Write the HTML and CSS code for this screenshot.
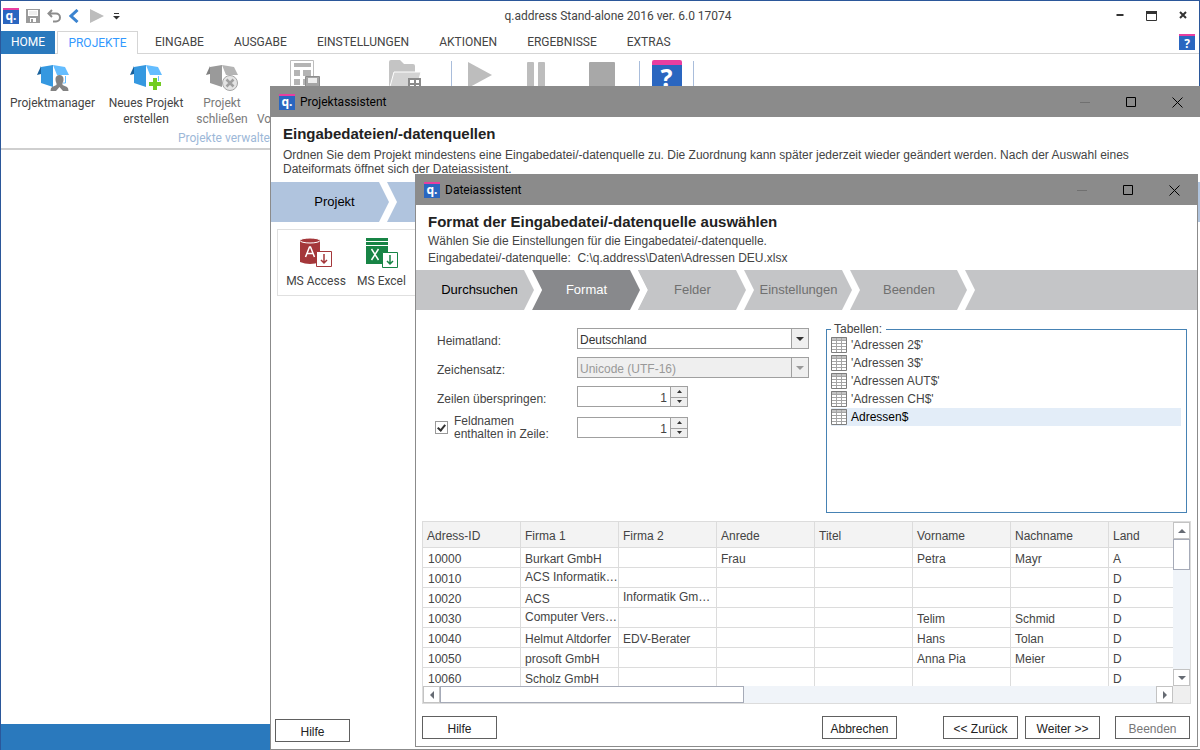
FILE: index.html
```html
<!DOCTYPE html>
<html lang="de">
<head>
<meta charset="utf-8">
<title>q.address Stand-alone 2016</title>
<link rel="stylesheet" href="styles.css">
</head>
<body>
<div class="app">
  <header class="app-bar">
    <div class="quick">
      <span class="logo">q.</span>
      <button class="plain" aria-label="Speichern"><svg width="14" height="14" viewBox="0 0 14 14"><path d="M0 0h14v14H0z" fill="#9b9b9b"/><path d="M2 1h10v6H2zM4 9h6v4H4z" fill="#fff"/><path d="M3 3h8M3 5h8" stroke="#ddd"/><path d="M5 10h2v3H5z" fill="#9b9b9b"/></svg></button>
      <button class="plain" aria-label="Rückgängig"><svg width="15" height="14" viewBox="0 0 15 14"><path d="M5 1 1.500 4.500 5 8M2 4.500h7a4 4 0 0 1 0 8H6" fill="none" stroke="#8d8d8d" stroke-width="2"/></svg></button>
      <button class="plain" aria-label="Zurück"><svg width="10" height="14" viewBox="0 0 10 14"><path d="M8.500 1 2 7l6.500 6" fill="none" stroke="#3b84d0" stroke-width="3"/></svg></button>
      <button class="plain" aria-label="Ausführen"><svg width="14" height="14" viewBox="0 0 14 14"><path d="M0 0l14 7-14 7z" fill="#bdbdbd"/></svg></button>
      <button class="plain" aria-label="Anpassen"><svg width="7" height="7" viewBox="0 0 7 7"><path d="M1 .5h5" stroke="#333"/><path d="M0 3h7L3.500 6.500z" fill="#333"/></svg></button>
    </div>
    <h1 class="app-title">q.address Stand-alone 2016 ver. 6.0 17074</h1>
    <div class="app-controls">
      <button class="plain" aria-label="Minimieren"><svg width="8" height="12" viewBox="0 0 8 12"><path d="M0.500 5h7" stroke="#333" stroke-width="2"/></svg></button>
      <button class="plain" aria-label="Maximieren"><svg width="11" height="11" viewBox="0 0 11 11"><path d="M.5.5h10v9H.5z" fill="none" stroke="#333"/><path d="M0 0h11v3H0z" fill="#333"/></svg></button>
      <button class="plain" aria-label="Schließen"><svg width="8" height="12" viewBox="0 0 8 12"><path d="M1 2l6 6M7 2l-6 6" stroke="#333" stroke-width="2"/></svg></button>
    </div>
  </header>
  <nav class="tabs">
    <button class="tab home">HOME</button>
    <button class="tab active">PROJEKTE</button>
    <button class="tab">EINGABE</button>
    <button class="tab">AUSGABE</button>
    <button class="tab">EINSTELLUNGEN</button>
    <button class="tab">AKTIONEN</button>
    <button class="tab">ERGEBNISSE</button>
    <button class="tab">EXTRAS</button>
    <button class="logo help" aria-label="Hilfe">?</button>
  </nav>
  <section class="ribbon">
    <div class="tools">
      <button class="tool w-xl">
        <svg width="36" height="32" viewBox="0 0 36 32"><path d="M2 15 6 6v8z" fill="#17609b"/><path d="M6 7l12-2v22L6 23z" fill="#3598e0"/><path d="M18 5l12 2 4 8H22z" fill="#64bdff"/><path d="M30.500 16v7H28" fill="none" stroke="#64bdff"/><path d="M24.500 15a4 4 0 0 1 4 4.500c0 2-.8 3-1 4v1.500l4.500 2q1.500 1 1.500 4h-5.500L24.500 27 21 31h-5.500q0-3 1.500-4l4.500-2v-1.500c-.2-1-1-2-1-4A4 4 0 0 1 24.500 15z" fill="#828282"/></svg>
        Projektmanager</button>
      <button class="tool w-l">
        <svg width="36" height="32" viewBox="0 0 36 32"><path d="M2 15 6 6v8z" fill="#17609b"/><path d="M6 7l12-2v22L6 23z" fill="#3598e0"/><path d="M18 5l12 2 4 8H22z" fill="#64bdff"/><path d="M30.500 16v5" stroke="#64bdff"/><path d="M25 18h4v4h4v4h-4v4h-4v-4h-4v-4h4z" fill="#72cc22"/></svg>
        Neues Projekt<br>erstellen</button>
      <button class="tool w-m" disabled>
        <svg width="36" height="32" viewBox="0 0 36 32"><path d="M2 15 6 6v8z" fill="#808080"/><path d="M6 7l12-2v22L6 23z" fill="#9a9a9a"/><path d="M18 5l12 2 4 8H22z" fill="#b4b4b4"/><circle cx="26" cy="23" r="7.500" fill="#e4e4e4" stroke="#a5a5a5"/><path d="M22.500 19.500l7 7m0-7-7 7" stroke="#a0a0a0" stroke-width="2.500"/></svg>
        Projekt<br>schließen</button>
      <button class="tool w-xl start" disabled>
        <svg width="32" height="32" viewBox="0 0 32 32"><path d="M.5.5h23v32H.5z" fill="#fff" stroke="#bdbdbd"/><path d="M4 3h17v4H4zM4 10h6v6H4zM4 19h6v6H4zM13 10h8v6h-8z" fill="#b4b4b4"/><path d="M13 19h4v6h-4z" fill="#b4b4b4"/><path d="M15.500 16.500h14v14h-14z" fill="#a5a5a5" stroke="#8d8d8d"/><path d="M18 18h9v5h-9z" fill="#eee"/></svg>
        <br>Vo</button>
      <button class="tool w-folder" disabled aria-label="Öffnen">
        <svg width="34" height="32" viewBox="0 0 34 32"><path d="M1 30V2q0-2 2-2h9l4 4h9q2 0 2 2v24z" fill="#c4c4c4"/><path d="M6 12h27l-5 18H1z" fill="#d3d3d3" stroke="#fff"/><path d="M20 18h13v12H20z" fill="#8a8a8a"/><path d="M22 20h4v3h-4zM28 20h3v3h-3zM22 25h4v3h-4zM28 25h3v3h-3z" fill="#fff"/></svg></button>
      <span class="sep"></span>
      <button class="tool w-s" disabled aria-label="Start"><svg width="24" height="32" viewBox="0 0 24 32"><path d="M0 2l24 13L0 28z" fill="#bdbdbd"/></svg></button>
      <button class="tool w-s" disabled aria-label="Pause"><svg width="18" height="32" viewBox="0 0 18 32"><path d="M0 3q0-1 1-1h5q1 0 1 1v29H0zM11 3q0-1 1-1h5q1 0 1 1v29h-7z" fill="#bdbdbd"/></svg></button>
      <button class="tool w-stop" disabled aria-label="Stopp"><svg width="26" height="32" viewBox="0 0 26 32"><path d="M0 3q0-1 1-1h24q1 0 1 1v25H0z" fill="#a8a8a8"/></svg></button>
      <span class="sep"></span>
      <button class="tool w-help" aria-label="Hilfe"><span class="logo big">?</span></button>
      <span class="sep"></span>
    </div>
    <p class="group-name">Projekte verwalten</p>
  </section>
  <main class="workspace"></main>
  <footer class="status"></footer>
</div>

<section class="dialog project" aria-label="Projektassistent">
  <header class="dialog-bar">
    <span class="logo">q.</span><h2>Projektassistent</h2>
    <button class="plain" disabled aria-label="Minimieren"><svg width="11" height="11"><path d="M0 5.500h10" stroke="#707070"/></svg></button>
    <button class="plain" aria-label="Maximieren"><svg width="11" height="11"><path d="M.5.5h9v9h-9z" fill="none" stroke="#000"/></svg></button>
    <button class="plain" aria-label="Schließen"><svg width="11" height="11"><path d="M.5.5l10 10m0-10-10 10" stroke="#000"/></svg></button>
  </header>
  <div class="intro">
    <h3>Eingabedateien/-datenquellen</h3>
    <p>Ordnen Sie dem Projekt mindestens eine Eingabedatei/-datenquelle zu. Die Zuordnung kann später jederzeit wieder geändert werden. Nach der Auswahl eines<br>Dateiformats öffnet sich der Dateiassistent.</p>
  </div>
  <ol class="steps blue">
    <li>Projekt<svg width="19" height="40"><path d="M0 0h8l10 20L8 40H0l10-20z" fill="#fff"/></svg></li>
  </ol>
  <div class="sources">
    <button class="source">
      <svg width="34" height="32" viewBox="0 0 34 32"><path d="M1 3v22q10 4 20 0V3z" fill="#a4373a"/><ellipse cx="11" cy="3.500" rx="10" ry="2.500" fill="#a4373a" stroke="#fff"/><path d="M6.500 20l4-10h1l4 10M8 16.500h6" fill="none" stroke="#fff" stroke-width="1.500"/><path d="M17.500 14.500h15v15h-15z" fill="#fff" stroke="#a4373a"/><path d="M25 17v9m-3-3l3 3 3-3" fill="none" stroke="#a4373a" stroke-width="1.500"/></svg>
      MS Access</button>
    <button class="source">
      <svg width="34" height="32" viewBox="0 0 34 32"><path d="M1 1h22v3H1zM1 5h22v3H1zM1 9h22v18H1z" fill="#178445"/><path d="M6.500 12l7 11m0-11-7 11" stroke="#fff" stroke-width="1.500"/><path d="M17.500 15.500h15v15h-15z" fill="#fff" stroke="#178445"/><path d="M25 18v9m-3-3l3 3 3-3" fill="none" stroke="#178445" stroke-width="1.500"/></svg>
      MS Excel</button>
  </div>
  <footer class="actions"><button class="btn">Hilfe</button></footer>
</section>

<section class="dialog file" aria-label="Dateiassistent">
  <header class="dialog-bar">
    <span class="logo">q.</span><h2>Dateiassistent</h2>
    <button class="plain" disabled aria-label="Minimieren"><svg width="11" height="11"><path d="M0 5.500h10" stroke="#707070"/></svg></button>
    <button class="plain" aria-label="Maximieren"><svg width="11" height="11"><path d="M.5.5h9v9h-9z" fill="none" stroke="#000"/></svg></button>
    <button class="plain" aria-label="Schließen"><svg width="11" height="11"><path d="M.5.5l10 10m0-10-10 10" stroke="#000"/></svg></button>
  </header>
  <div class="intro">
    <h3>Format der Eingabedatei/-datenquelle auswählen</h3>
    <p>Wählen Sie die Einstellungen für die Eingabedatei/-datenquelle.</p>
    <p>Eingabedatei/-datenquelle:&nbsp; C:\q.address\Daten\Adressen DEU.xlsx</p>
  </div>
  <ol class="steps">
    <li class="done">Durchsuchen<svg width="19" height="40"><path d="M8 0h11v40H8l10-20z" fill="#88898c"/><path d="M0 0h8l10 20L8 40H0l10-20z" fill="#fff"/></svg></li>
    <li class="current">Format<svg width="19" height="40"><path d="M8 0h11v40H8l10-20z" fill="#c4c5c7"/><path d="M0 0h8l10 20L8 40H0l10-20z" fill="#fff"/></svg></li>
    <li>Felder<svg width="19" height="40"><path d="M0 0h8l10 20L8 40H0l10-20z" fill="#fff"/></svg></li>
    <li>Einstellungen<svg width="19" height="40"><path d="M0 0h8l10 20L8 40H0l10-20z" fill="#fff"/></svg></li>
    <li class="last">Beenden<svg width="19" height="40"><path d="M0 0h8l10 20L8 40H0l10-20z" fill="#fff"/></svg></li>
  </ol>
  <div class="settings">
    <div class="form">
      <div class="field"><label for="land">Heimatland:</label>
        <div class="combo"><select id="land"><option>Deutschland</option></select><svg width="17" height="19"><path d="M.5 0v19" stroke="#a0a0a0"/><path d="M5 8h8l-4 4z" fill="#333"/></svg></div></div>
      <div class="field"><label for="charset">Zeichensatz:</label>
        <div class="combo"><select id="charset" disabled><option>Unicode (UTF-16)</option></select><svg width="17" height="19"><path d="M.5 0v19" stroke="#a0a0a0"/><path d="M5 8h8l-4 4z" fill="#999"/></svg></div></div>
      <div class="field"><label for="skip">Zeilen überspringen:</label>
        <div class="spin"><input id="skip" type="number" value="1"><button aria-label="Mehr"><svg width="7" height="4"><path d="M1 3h5L3.500 0z" fill="#333"/></svg></button><button aria-label="Weniger"><svg width="7" height="4"><path d="M1 0h5L3.500 3z" fill="#333"/></svg></button></div></div>
      <div class="field"><label class="check"><input type="checkbox" checked><span>Feldnamen<br>enthalten in Zeile:</span></label>
        <div class="spin"><input type="number" value="1" aria-label="Zeile der Feldnamen"><button aria-label="Mehr"><svg width="7" height="4"><path d="M1 3h5L3.500 0z" fill="#333"/></svg></button><button aria-label="Weniger"><svg width="7" height="4"><path d="M1 0h5L3.500 3z" fill="#333"/></svg></button></div></div>
    </div>
    <fieldset class="sheets">
      <legend>Tabellen:</legend>
      <ul>
        <li><svg width="16" height="16"><use href="#grid"/></svg>'Adressen 2$'</li>
        <li><svg width="16" height="16"><use href="#grid"/></svg>'Adressen 3$'</li>
        <li><svg width="16" height="16"><use href="#grid"/></svg>'Adressen AUT$'</li>
        <li><svg width="16" height="16"><use href="#grid"/></svg>'Adressen CH$'</li>
        <li class="selected"><svg width="16" height="16"><use href="#grid"/></svg>Adressen$</li>
      </ul>
    </fieldset>
  </div>
  <div class="preview">
    <div class="table-view">
      <table>
        <thead><tr><th>Adress-ID</th><th>Firma 1</th><th>Firma 2</th><th>Anrede</th><th>Titel</th><th>Vorname</th><th>Nachname</th><th>Land</th></tr></thead>
        <tbody>
          <tr><td>10000</td><td>Burkart GmbH</td><td></td><td>Frau</td><td></td><td>Petra</td><td>Mayr</td><td>A</td></tr>
          <tr><td>10010</td><td class="cut">ACS Informatik…</td><td></td><td></td><td></td><td></td><td></td><td>D</td></tr>
          <tr><td>10020</td><td>ACS</td><td class="cut">Informatik Gm…</td><td></td><td></td><td></td><td></td><td>D</td></tr>
          <tr><td>10030</td><td class="cut">Computer Vers…</td><td></td><td></td><td></td><td>Telim</td><td>Schmid</td><td>D</td></tr>
          <tr><td>10040</td><td>Helmut Altdorfer</td><td>EDV-Berater</td><td></td><td></td><td>Hans</td><td>Tolan</td><td>D</td></tr>
          <tr><td>10050</td><td>prosoft GmbH</td><td></td><td></td><td></td><td>Anna Pia</td><td>Meier</td><td>D</td></tr>
          <tr><td>10060</td><td>Scholz GmbH</td><td></td><td></td><td></td><td></td><td></td><td>D</td></tr>
        </tbody>
      </table>
    </div>
    <div class="scroll vertical">
      <button aria-label="Nach oben"><svg width="8" height="8"><path d="M0 6h8L4 2z" fill="#666b73"/></svg></button>
      <span class="thumb"></span><span class="track"></span>
      <button aria-label="Nach unten"><svg width="8" height="8"><path d="M0 2h8L4 6z" fill="#666b73"/></svg></button>
    </div>
    <div class="scroll horizontal">
      <button aria-label="Nach links"><svg width="8" height="8"><path d="M6 0v8L2 4z" fill="#666b73"/></svg></button>
      <span class="thumb"></span><span class="track"></span>
      <button aria-label="Nach rechts"><svg width="8" height="8"><path d="M2 0v8l4-4z" fill="#666b73"/></svg></button>
    </div>
    <span class="corner"></span>
  </div>
  <footer class="actions">
    <button class="btn">Hilfe</button>
    <button class="btn cancel">Abbrechen</button>
    <button class="btn">&lt;&lt; Zurück</button>
    <button class="btn next">Weiter &gt;&gt;</button>
    <button class="btn" disabled>Beenden</button>
  </footer>
</section>

<svg class="defs" width="0" height="0" aria-hidden="true"><symbol id="grid" viewBox="0 0 16 16"><path d="M0 0h16v16H0z" fill="#fff"/><path d="M0 0h16v4H0z" fill="#c4c4c4"/><path d="M5.500 1v14M10.500 1v14M1 3.500h14M1 6.500h14M1 9.500h14M1 12.500h14" stroke="#a5a5a5"/><path d="M.5.5h15v15H.5z" fill="none" stroke="#7d7d7d"/></symbol></svg>
</body>
</html>
```
FILE: styles.css
```css
* { box-sizing: border-box; }
body { margin: 0; font: 12px/16px "Liberation Sans", Arial, sans-serif; color: #444; background: #fff; }
h1, h2, h3, p, ol, ul { margin: 0; padding: 0; list-style: none; }
button, input, select { font: inherit; color: inherit; padding: 0; margin: 0; border-radius: 0; }
svg { display: block; flex: none; }
.defs { position: absolute; }
.plain { border: 0; background: none; display: flex; }

.app { height: 100vh; min-height: 750px; display: flex; flex-direction: column; border: 1px solid #2b579a; border-bottom: 0; font-family: Roboto, "Open Sans", sans-serif; }
.logo { width: 16px; height: 16px; flex: none; background: #2a66c0; border: 0; border-top: 2px solid #e83ea0; color: #fff; font: bold 12px/11px "Noto Sans", sans-serif; text-align: center; }
.logo.big { display: block; width: 30px; height: 32px; border-top-width: 5px; font-size: 25px; line-height: 24px; border-radius: 2px; }

.app-bar { height: 30px; display: flex; align-items: center; }
.quick { width: 119px; display: flex; align-items: center; gap: 7px; padding-left: 2px; }
.quick .plain { flex: none; }
.quick .plain:nth-of-type(4) { margin-left: 4px; }
.quick .plain:last-child { margin-left: 2px; }
.app-title { flex: 1; text-align: center; font-size: 12px; font-weight: 400; }
.app-controls { display: flex; align-items: center; gap: 22px; padding-right: 12px; }

.tabs { height: 23px; display: flex; border-bottom: 1px solid #d5d5d5; }
.tab { border: 0; background: none; padding: 0 15px; height: 23px; font-size: 12px; line-height: 23px; }
.tab.home { width: 54px; padding: 0; background: #2a79bd; color: #fff; margin-right: 2px; }
.tab.active { width: 81px; padding: 0; background: #fff; color: #3399ff; border: 1px solid #d5d5d5; border-bottom: 0; margin-right: 2px; }
.tabs .help { margin: 3px 4px 0 auto; }

.ribbon { height: 96px; border-bottom: 2px solid #cfcfcf; }
.tools { display: flex; height: 76px; padding-top: 6px; }
.tool { border: 0; background: none; display: block; line-height: 16px; text-align: center; flex: none; white-space: nowrap; align-self: flex-start; }
.tool svg, .tool .logo { margin: 0 auto 3px; }
.tool:disabled { color: #7a7a7a; }
.tool.start { text-align: left; padding: 0 4px 0 1px; }
.w-xl { width: 103px; }
.w-l { width: 84px; }
.w-m { width: 68px; }
.w-s { width: 56px; }
.w-folder { width: 92px; }
.w-stop { width: 75px; }
.w-help { width: 53px; }
.sep { width: 1px; background: #a9bddb; margin-top: 1px; }
.group-name { padding-left: 177px; color: #9db8d8; }
.workspace { flex: 1; }
.status { height: 26px; background: #2a79bd; }

.dialog { position: absolute; display: flex; flex-direction: column; background: #fff; border: 1px solid #8b8b8b; }
.dialog.project { left: 270px; top: 86px; right: 0; height: 664px; border-right: 0; }
.dialog.file { left: 415px; top: 174px; right: 2px; height: 573px; }
.dialog-bar { height: 30px; flex: none; display: flex; align-items: center; padding: 0 17px 0 8px; gap: 35px; background: #8b8b8b; color: #000; }
.dialog-bar h2 { flex: 1; margin-left: -30px; font: 12px/16px Roboto, "Open Sans", sans-serif; }
.intro { padding: 8px 12px 6px; line-height: 14px; }
.intro h3 { font-size: 15px; line-height: 18px; color: #222; margin-bottom: 5px; }
.file .intro { padding-bottom: 3px; }
.file .intro h3 { margin-bottom: 2px; }
.file .intro p { line-height: 17px; }

.steps { display: flex; flex: none; height: 40px; background: #c4c5c7; color: #707070; font-size: 13px; line-height: 40px; text-align: center; }
.steps li { display: flex; width: 106px; justify-content: center; }
.steps li svg { margin-left: auto; }
.steps li::before { content: ""; margin-right: auto; }
.steps .done { width: 127px; padding-left: 19px; color: #000; }
.steps .current { background: #88898c; color: #fff; }
.steps .last { width: 115px; }
.steps.blue { background: #b0c4de; color: #000; }
.steps.blue li { width: 127px; padding-left: 19px; }

.sources { margin: 7px 6px; height: 67px; display: flex; border: 1px solid #e0e0e0; padding: 7px 5px; }
.source { width: 65px; border: 0; background: none; font: 12px/16px Roboto, "Open Sans", sans-serif; white-space: nowrap; }
.source svg { margin: 0 auto 4px; }
.source:first-child { width: 66px; }

.settings { display: flex; justify-content: space-between; padding: 12px 10px 0 19px; height: 211px; }
.form { display: flex; flex-direction: column; gap: 8px; padding-top: 6px; }
.field { display: flex; height: 21px; }
.field label { width: 142px; padding: 5px 0 0 2px; line-height: 16px; }
.field .check { display: flex; align-items: center; gap: 6px; padding: 0; line-height: 13px; }
.field:last-child { margin-top: 2px; }
.check input { appearance: none; width: 13px; height: 13px; border: 1px solid #999; display: flex; justify-content: center; padding-top: 1px; }
.check input:checked::after { content: ""; box-sizing: border-box; width: 5px; height: 8px; border: solid #333; border-width: 0 2px 2px 0; transform: rotate(40deg); }
.combo { width: 232px; display: grid; border: 1px solid #a0a0a0; }
.combo select { grid-area: 1 / 1; appearance: none; border: 0; background: #fff; padding: 2px 2px 0; color: #333; }
.combo select:disabled { background: #efefef; color: #999; opacity: 1; }
.combo svg { grid-area: 1 / 1; justify-self: end; background: #efefef; pointer-events: none; }
.spin { width: 111px; display: grid; grid-template: 1fr 1fr / 1fr 17px; border: 1px solid #a0a0a0; }
.spin input { grid-row: 1 / 3; min-width: 0; border: 0; padding: 2px 3px 0; text-align: right; appearance: textfield; }
.spin input::-webkit-inner-spin-button { display: none; }
.spin button { display: grid; place-items: center; border: 0 solid #a0a0a0; border-left-width: 1px; background: #efefef; min-height: 0; }
.spin button:last-child { border-top-width: 1px; }
.sheets { width: 361px; height: 191px; margin: 0; padding: 0 5px 0 4px; border: 1px solid #4682b4; }
.sheets legend { padding: 0 4px 0 3px; line-height: 14px; }
.sheets li { display: flex; align-items: center; gap: 4px; height: 18px; }
.sheets .selected { background: #e3edf8; color: #000; }

.preview { margin: 0 6px; height: 183px; display: grid; grid-template: 1fr 17px / 1fr 17px; border: 1px solid #dcdcdc; }
.table-view { overflow: hidden; min-height: 0; min-width: 0; }
table { table-layout: fixed; width: 784px; border-collapse: separate; border-spacing: 0; }
th, td { height: 20px; padding: 4px 0 0 4px; border: solid #dcdcdc; border-width: 0 1px 1px 0; text-align: left; font-weight: 400; line-height: 15px; white-space: nowrap; overflow: hidden; vertical-align: top; }
td:first-child { padding-left: 5px; }
th { height: 26px; padding-top: 7px; background: #f3f3f3; }
td.cut { padding-top: 2px; }
.scroll { display: flex; background: #f0f4f9; }
.scroll button { flex: 0 0 17px; width: 17px; height: 17px; display: grid; place-items: center; border: 1px solid #c3c3c3; background: #fff; }
.thumb { border: 1px solid #a6abb8; background: #fff; }
.track { flex: 1; }
.vertical { flex-direction: column; }
.vertical .thumb { height: 31px; }
.horizontal .thumb { width: 304px; }
.corner { background: #efefef; }

.actions { display: flex; padding: 12px 7px 0 6px; }
.project .actions { margin-top: auto; padding: 0 4px 7px; }
.btn { width: 75px; height: 23px; border: 1px solid #606060; background: #fff; color: #222; padding-top: 2px; }
.btn:disabled { color: #777; }
.cancel { margin: 0 46px 0 auto; }
.next { margin: 0 15px 0 7px; }
```
